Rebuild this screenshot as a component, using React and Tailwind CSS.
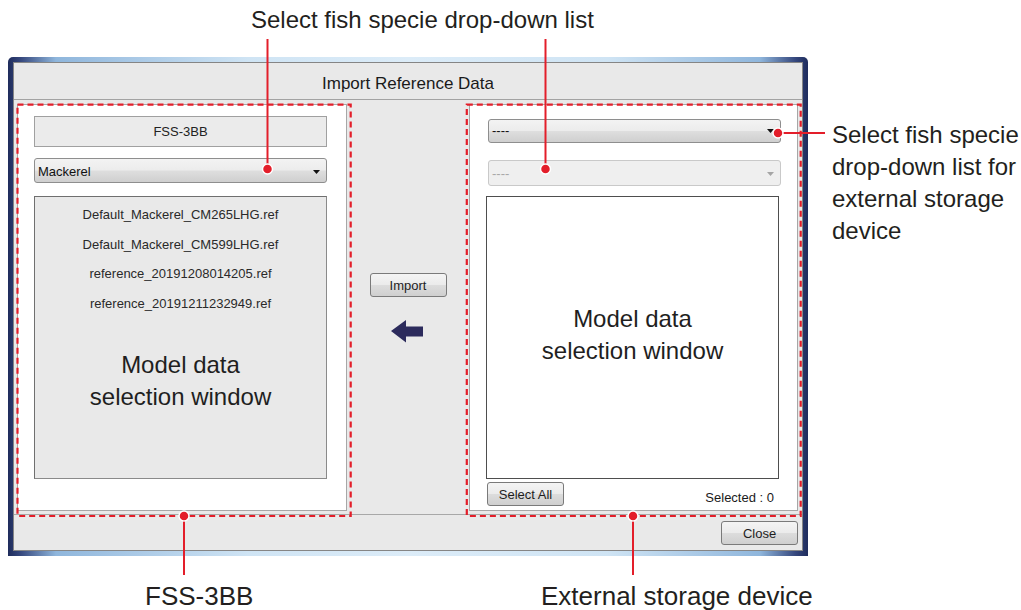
const btn =
  "flex items-center justify-center rounded-[3px] border border-[#7a7a7a] bg-[linear-gradient(to_bottom,#f4f4f4_0%,#ebebeb_48%,#dcdcdc_52%,#cfcfcf_100%)] text-[13px] leading-none text-[#1e1e1e]";

function Caret({ color = "#111" }) {
  return (
    <svg width="7" height="4" viewBox="0 0 7 4" className="shrink-0">
      <polygon points="0,0 7,0 3.5,4" fill={color} />
    </svg>
  );
}

function Annotations() {
  const red = "#e31e2a";
  const Dot = ({ cx, cy }) => (
    <circle cx={cx} cy={cy} r="5" fill={red} stroke="#fff" strokeWidth="1.5" />
  );
  return (
    <svg
      className="absolute left-0 top-0 pointer-events-none"
      width="1021"
      height="610"
      viewBox="0 0 1021 610"
    >
      <rect x="17.5" y="104.7" width="333.2" height="411.3" fill="none" stroke={red} strokeWidth="2.2" strokeDasharray="6 4" />
      <rect x="466.8" y="104.7" width="333.9" height="411.3" fill="none" stroke={red} strokeWidth="2.2" strokeDasharray="6 4" />
      <line x1="267.5" y1="39" x2="267.5" y2="169" stroke={red} strokeWidth="2" />
      <line x1="545.5" y1="39" x2="545.5" y2="169" stroke={red} strokeWidth="2" />
      <line x1="778" y1="133" x2="825" y2="133" stroke={red} strokeWidth="2" />
      <line x1="184" y1="516" x2="184" y2="575" stroke={red} strokeWidth="2" />
      <line x1="633" y1="516" x2="633" y2="575" stroke={red} strokeWidth="2" />
      <Dot cx={267.5} cy={169} />
      <Dot cx={545.5} cy={169} />
      <Dot cx={778} cy={133} />
      <Dot cx={184} cy={516} />
      <Dot cx={633} cy={516} />
    </svg>
  );
}

export default function App() {
  return (
    <div className="relative w-[1021px] h-[610px] overflow-hidden bg-white font-['Liberation_Sans',Arial,sans-serif]">
      <div className="pl-[8px] pt-[57px]">
        {/* window frame */}
        <div className="w-[800px] h-[499px] p-[5px] rounded-t-[5px] bg-[linear-gradient(to_right,#1f2c5c_0%,#34467c_1.5%,#8fb6dc_6%,#cfe4f4_30%,#dcecf8_50%,#cfe4f4_75%,#8fb6dc_94%,#34467c_98.5%,#1f2c5c_100%)]">
          <div className="flex h-full flex-col border border-[#858585] bg-[#e9e9e9]">
            {/* title */}
            <div className="h-[37px] shrink-0 border-b border-[#a3a3a3] pt-[12px] text-center text-[17px] leading-[17px] text-[#1a1a1a]">
              Import Reference Data
            </div>
            {/* body */}
            <div className="flex h-[415px] shrink-0 border-b border-[#a8a8a8] pl-[3px] pt-[4px]">
              {/* left panel */}
              <div className="flex h-[407px] w-[330px] flex-col border border-[#a7a7a7] bg-white pl-[16px] pt-[11px]">
                <div className="flex h-[31px] w-[293px] items-center justify-center border border-[#a0a0a0] bg-[#ebebeb] text-[13px] text-[#222]">
                  FSS-3BB
                </div>
                <div className="mt-[11px] flex h-[25px] w-[293px] items-center justify-between rounded-[3px] border border-[#8e8e8e] bg-[linear-gradient(to_bottom,#f3f3f3_0%,#ececec_48%,#dedede_52%,#cfcfcf_100%)] pl-[3px] pr-[6px] pt-[2px] text-[13px] text-[#111]">
                  <span>Mackerel</span>
                  <Caret />
                </div>
                <div className="mt-[13px] flex h-[283px] w-[293px] flex-col items-center border border-[#6f6f6f] border-b-[#8a8a8a] border-r-[#8a8a8a] bg-[#e9e9e9] pt-[3px] text-[#2a2a2a]">
                  {[
                    "Default_Mackerel_CM265LHG.ref",
                    "Default_Mackerel_CM599LHG.ref",
                    "reference_20191208014205.ref",
                    "reference_20191211232949.ref",
                  ].map((t) => (
                    <div key={t} className="h-[29.5px] text-[13px] leading-[29.5px]">
                      {t}
                    </div>
                  ))}
                  <div className="mt-[31px] text-center text-[24px] leading-[32px] text-[#1f1f1f]">
                    Model data
                    <br />
                    selection window
                  </div>
                </div>
              </div>
              {/* middle */}
              <div className="flex w-[122px] flex-col items-center pt-[169px]">
                <div className={btn + " h-[24px] w-[77px]"}>Import</div>
                <svg width="32" height="23" viewBox="0 0 32 23" className="mt-[23px] ml-[-2px]">
                  <polygon points="0,11 15,0 15,6.5 32,6.5 32,16.5 15,16.5 15,22.5" fill="#2c2b5c" />
                </svg>
              </div>
              {/* right panel */}
              <div className="flex h-[407px] w-[329px] flex-col border border-[#a7a7a7] bg-white pl-[16px] pt-[14px]">
                <div className="ml-[2px] flex h-[24px] w-[293px] items-center justify-between rounded-[3px] border border-[#8e8e8e] bg-[linear-gradient(to_bottom,#f3f3f3_0%,#ececec_48%,#dedede_52%,#cfcfcf_100%)] pl-[3px] pr-[6px] text-[13px] text-[#111]">
                  <span>----</span>
                  <Caret />
                </div>
                <div className="ml-[2px] mt-[17px] flex h-[26px] w-[293px] items-center justify-between rounded-[3px] border border-[#c9c9c9] bg-[#efefef] pl-[3px] pr-[6px] pt-[2px] text-[13px] text-[#a8a8a8]">
                  <span>----</span>
                  <Caret color="#a5a5a5" />
                </div>
                <div className="mt-[10px] flex h-[283px] w-[293px] flex-col items-center border border-[#4e4e4e] bg-white pt-[106px] text-center text-[24px] leading-[32px] text-[#1f1f1f]">
                  Model data
                  <br />
                  selection window
                </div>
                <div className="mt-[3px] flex w-[293px] items-end justify-between pl-[1px] pr-[5px]">
                  <div className={btn + " h-[24px] w-[77px]"}>Select All</div>
                  <div className="mb-[2px] text-[13px] leading-[13px] text-[#1a1a1a]">Selected : 0</div>
                </div>
              </div>
            </div>
            {/* footer */}
            <div className="flex flex-1 justify-end pr-[4px] pt-[6px]">
              <div className={btn + " h-[24px] w-[77px]"}>Close</div>
            </div>
          </div>
        </div>
      </div>

      <Annotations />

      <div className="absolute left-[251px] top-[8px] whitespace-nowrap text-[24px] leading-none text-[#231f20]">
        Select fish specie drop-down list
      </div>
      <div className="absolute left-[832px] top-[119px] whitespace-nowrap text-[24px] leading-[32px] text-[#231f20]">
        Select fish specie
        <br />
        drop-down list for
        <br />
        external storage
        <br />
        device
      </div>
      <div className="absolute left-[145px] top-[583px] whitespace-nowrap text-[26px] leading-none text-[#231f20]">
        FSS-3BB
      </div>
      <div className="absolute left-[541px] top-[583px] whitespace-nowrap text-[26px] leading-none text-[#231f20]">
        External storage device
      </div>
    </div>
  );
}
